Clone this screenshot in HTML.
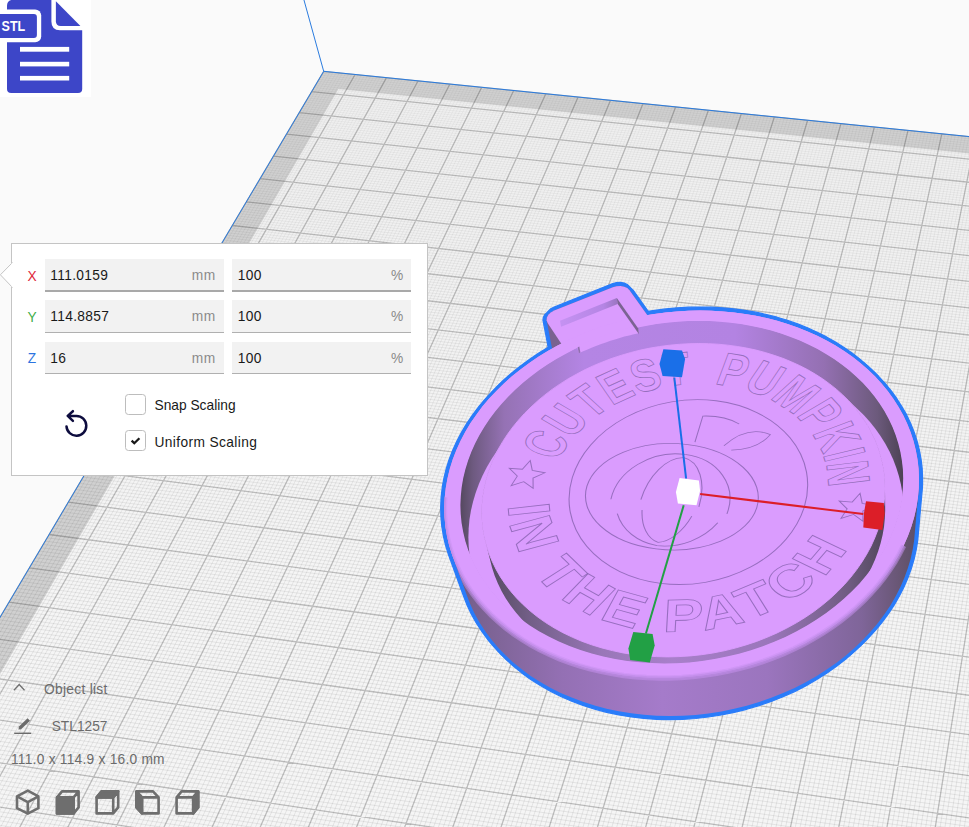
<!DOCTYPE html>
<html><head><meta charset="utf-8"><title>Cura</title>
<style>
html,body{margin:0;padding:0;}
body{width:969px;height:827px;overflow:hidden;background:#fafafa;position:relative;font-family:"Liberation Sans",sans-serif;font-size:13.75px;color:#191919;}
.vp{position:absolute;left:0;top:0;}
.abs{position:absolute;}
#stl{left:0;top:0;width:91px;height:97px;background:#fff;}
#panel{left:11px;top:242.5px;width:415px;height:231.5px;background:#fff;border:1px solid #c4c4c4;box-sizing:content-box;}
.fld{position:absolute;height:31px;background:#f2f2f2;border-bottom:1px solid #b0b0b0;box-sizing:content-box;}
.fld .v{position:absolute;left:5.6px;top:0;line-height:33.8px;white-space:nowrap;letter-spacing:0.35px;}
.fld .u{position:absolute;right:8px;top:0;line-height:33.8px;color:#8a8a8a;white-space:nowrap;letter-spacing:0.5px;}
.ax{position:absolute;width:20px;text-align:center;line-height:33.8px;}
.cb{position:absolute;width:19px;height:19px;border:1px solid #bdbdbd;border-radius:3.5px;background:#fff;}
.lbl{position:absolute;white-space:nowrap;line-height:20px;}
.g{color:#6b6b6b;white-space:nowrap;}
</style></head><body>
<svg class="vp" width="969" height="827" viewBox="0 0 969 827"><defs><clipPath id="cpPlate"><path d="M323.7 71.3 L1322.7 172.3 L1322.1 1278.3 L-236.5 1016.3Z"/></clipPath></defs>
<path d="M323.7 71.3 L1322.7 172.3 L1322.1 1278.3 L-236.5 1016.3Z" fill="#d0d0d0"/>
<defs><linearGradient id="gPl" gradientUnits="userSpaceOnUse" x1="0" y1="70" x2="0" y2="600"><stop offset="0" stop-color="#efefef"/><stop offset="1" stop-color="#f5f5f5"/></linearGradient></defs>
<path d="M338.4 89 L1295.9 186.8 L1279.8 1227.2 L-180 985.7Z" fill="url(#gPl)"/>
<defs><linearGradient id="gMin" gradientUnits="userSpaceOnUse" x1="0" y1="70" x2="0" y2="640"><stop offset="0" stop-color="#000" stop-opacity="0.035"/><stop offset="0.45" stop-color="#000" stop-opacity="0.06"/><stop offset="1" stop-color="#000" stop-opacity="0.078"/></linearGradient></defs>
<path d="M326.9 71.6L-231.8 1017.1M322.5 73.3L1322.7 174.5M330 71.9L-227.1 1017.9M321.3 75.3L1322.7 176.8M333.1 72.2L-222.4 1018.7M320.1 77.4L1322.7 179.1M336.3 72.6L-217.6 1019.5M318.9 79.4L1322.7 181.4M339.4 72.9L-212.9 1020.3M317.7 81.4L1322.7 183.7M342.5 73.2L-208.2 1021.1M316.5 83.5L1322.7 186M345.7 73.5L-203.5 1021.9M315.3 85.5L1322.7 188.3M348.8 73.8L-198.8 1022.7M314.1 87.6L1322.7 190.7M351.9 74.1L-194 1023.4M312.8 89.7L1322.7 193M358.2 74.8L-184.6 1025M310.4 93.8L1322.7 197.7M361.4 75.1L-179.8 1025.8M309.2 95.9L1322.7 200M364.5 75.4L-175.1 1026.6M307.9 98L1322.7 202.4M367.6 75.7L-170.3 1027.4M306.7 100L1322.7 204.7M370.8 76L-165.6 1028.2M305.4 102.1L1322.7 207.1M373.9 76.4L-160.8 1029M304.2 104.2L1322.7 209.5M377.1 76.7L-156.1 1029.8M303 106.3L1322.7 211.8M380.2 77L-151.3 1030.6M301.7 108.4L1322.7 214.2M383.4 77.3L-146.6 1031.4M300.5 110.5L1322.7 216.6M389.7 78L-137 1033M297.9 114.8L1322.7 221.4M392.9 78.3L-132.3 1033.8M296.7 116.9L1322.7 223.8M396 78.6L-127.5 1034.6M295.4 119L1322.7 226.2M399.2 78.9L-122.7 1035.4M294.2 121.2L1322.7 228.6M402.3 79.2L-117.9 1036.2M292.9 123.3L1322.6 231.1M405.5 79.6L-113.2 1037M291.6 125.5L1322.6 233.5M408.7 79.9L-108.4 1037.8M290.3 127.6L1322.6 235.9M411.8 80.2L-103.6 1038.6M289.1 129.8L1322.6 238.4M415 80.5L-98.8 1039.5M287.8 131.9L1322.6 240.8M421.3 81.2L-89.2 1041.1M285.2 136.3L1322.6 245.8M424.5 81.5L-84.4 1041.9M283.9 138.5L1322.6 248.2M427.7 81.8L-79.6 1042.7M282.6 140.7L1322.6 250.7M430.8 82.1L-74.8 1043.5M281.3 142.8L1322.6 253.2M434 82.4L-70 1044.3M280 145L1322.6 255.7M437.2 82.8L-65.2 1045.1M278.7 147.2L1322.6 258.2M440.3 83.1L-60.4 1045.9M277.4 149.5L1322.6 260.7M443.5 83.4L-55.6 1046.7M276.1 151.7L1322.6 263.2M446.7 83.7L-50.7 1047.5M274.8 153.9L1322.6 265.7M453.1 84.4L-41.1 1049.2M272.1 158.3L1322.6 270.8M456.2 84.7L-36.2 1050M270.8 160.6L1322.6 273.3M459.4 85L-31.4 1050.8M269.5 162.8L1322.6 275.9M462.6 85.3L-26.6 1051.6M268.1 165.1L1322.6 278.4M465.8 85.6L-21.7 1052.4M266.8 167.3L1322.6 281M469 86L-16.9 1053.2M265.5 169.6L1322.6 283.5M472.2 86.3L-12.1 1054M264.1 171.8L1322.6 286.1M475.4 86.6L-7.2 1054.8M262.8 174.1L1322.6 288.7M478.5 86.9L-2.4 1055.7M261.4 176.4L1322.6 291.3M484.9 87.6L7.4 1057.3M258.7 181L1322.6 296.5M488.1 87.9L12.2 1058.1M257.4 183.2L1322.6 299.1M491.3 88.2L17.1 1058.9M256 185.5L1322.6 301.7M494.5 88.6L22 1059.7M254.6 187.8L1322.6 304.3M497.7 88.9L26.8 1060.6M253.3 190.2L1322.6 307M500.9 89.2L31.7 1061.4M251.9 192.5L1322.6 309.6M504.1 89.5L36.6 1062.2M250.5 194.8L1322.6 312.2M507.3 89.8L41.5 1063M249.1 197.1L1322.6 314.9M510.5 90.2L46.3 1063.8M247.7 199.5L1322.6 317.6M516.9 90.8L56.1 1065.5M245 204.1L1322.6 322.9M520.1 91.1L61 1066.3M243.6 206.5L1322.6 325.6M523.3 91.5L65.9 1067.1M242.2 208.9L1322.6 328.3M526.6 91.8L70.8 1068M240.8 211.2L1322.6 331M529.8 92.1L75.7 1068.8M239.4 213.6L1322.6 333.7M533 92.4L80.6 1069.6M238 216L1322.6 336.4M536.2 92.8L85.5 1070.4M236.5 218.4L1322.6 339.1M539.4 93.1L90.4 1071.3M235.1 220.7L1322.6 341.8M542.6 93.4L95.3 1072.1M233.7 223.1L1322.6 344.6M549.1 94.1L105.2 1073.7M230.9 227.9L1322.6 350M552.3 94.4L110.1 1074.6M229.4 230.4L1322.6 352.8M555.5 94.7L115 1075.4M228 232.8L1322.6 355.6M558.7 95L120 1076.2M226.6 235.2L1322.6 358.3M562 95.4L124.9 1077.1M225.1 237.6L1322.6 361.1M565.2 95.7L129.8 1077.9M223.7 240.1L1322.6 363.9M568.4 96L134.8 1078.7M222.2 242.5L1322.6 366.7M571.6 96.3L139.7 1079.5M220.8 245L1322.6 369.5M574.9 96.7L144.7 1080.4M219.3 247.4L1322.6 372.3M581.3 97.3L154.6 1082M216.4 252.4L1322.6 378M584.6 97.7L159.5 1082.9M214.9 254.9L1322.6 380.8M587.8 98L164.5 1083.7M213.4 257.3L1322.6 383.6M591 98.3L169.4 1084.5M212 259.8L1322.6 386.5M594.3 98.6L174.4 1085.4M210.5 262.3L1322.6 389.4M597.5 99L179.4 1086.2M209 264.8L1322.6 392.2M600.8 99.3L184.3 1087M207.5 267.4L1322.6 395.1M604 99.6L189.3 1087.9M206 269.9L1322.6 398M607.2 99.9L194.3 1088.7M204.5 272.4L1322.6 400.9M613.7 100.6L204.3 1090.4M201.5 277.5L1322.6 406.7M617 100.9L209.2 1091.2M200 280L1322.6 409.6M620.2 101.3L214.2 1092.1M198.5 282.6L1322.6 412.5M623.5 101.6L219.2 1092.9M197 285.1L1322.6 415.5M626.7 101.9L224.2 1093.7M195.4 287.7L1322.5 418.4M630 102.2L229.2 1094.6M193.9 290.3L1322.5 421.4M633.2 102.6L234.2 1095.4M192.4 292.9L1322.5 424.3M636.5 102.9L239.2 1096.3M190.9 295.4L1322.5 427.3M639.7 103.2L244.2 1097.1M189.3 298L1322.5 430.3M646.3 103.9L254.3 1098.8M186.2 303.2L1322.5 436.3M649.5 104.2L259.3 1099.6M184.7 305.9L1322.5 439.3M652.8 104.5L264.3 1100.5M183.1 308.5L1322.5 442.3M656 104.9L269.3 1101.3M181.6 311.1L1322.5 445.3M659.3 105.2L274.4 1102.2M180 313.8L1322.5 448.3M662.6 105.5L279.4 1103M178.4 316.4L1322.5 451.4M665.8 105.9L284.4 1103.9M176.9 319L1322.5 454.4M669.1 106.2L289.5 1104.7M175.3 321.7L1322.5 457.5M672.4 106.5L294.5 1105.6M173.7 324.4L1322.5 460.5M678.9 107.2L304.6 1107.3M170.5 329.7L1322.5 466.7M682.2 107.5L309.7 1108.1M168.9 332.4L1322.5 469.8M685.5 107.9L314.7 1109M167.3 335.1L1322.5 472.9M688.7 108.2L319.8 1109.8M165.7 337.8L1322.5 476M692 108.5L324.9 1110.7M164.1 340.5L1322.5 479.1M695.3 108.8L329.9 1111.5M162.5 343.2L1322.5 482.3M698.6 109.2L335 1112.4M160.9 346L1322.5 485.4M701.9 109.5L340.1 1113.2M159.3 348.7L1322.5 488.6M705.2 109.8L345.1 1114.1M157.6 351.4L1322.5 491.7M711.7 110.5L355.3 1115.8M154.4 357L1322.5 498.1M715 110.8L360.4 1116.6M152.7 359.7L1322.5 501.3M718.3 111.2L365.5 1117.5M151.1 362.5L1322.5 504.5M721.6 111.5L370.6 1118.4M149.5 365.3L1322.5 507.7M724.9 111.8L375.7 1119.2M147.8 368.1L1322.5 510.9M728.2 112.2L380.8 1120.1M146.1 370.9L1322.5 514.1M731.5 112.5L385.9 1120.9M144.5 373.7L1322.5 517.3M734.8 112.8L391 1121.8M142.8 376.5L1322.5 520.6M738.1 113.2L396.1 1122.6M141.1 379.3L1322.5 523.9M744.7 113.8L406.3 1124.4M137.8 385L1322.5 530.4M748 114.2L411.4 1125.2M136.1 387.8L1322.5 533.7M751.3 114.5L416.6 1126.1M134.4 390.6L1322.5 537M754.6 114.8L421.7 1126.9M132.7 393.5L1322.5 540.3M757.9 115.2L426.8 1127.8M131 396.4L1322.5 543.6M761.2 115.5L432 1128.7M129.3 399.3L1322.5 546.9M764.5 115.8L437.1 1129.5M127.6 402.1L1322.5 550.3M767.8 116.2L442.2 1130.4M125.9 405L1322.5 553.6M771.1 116.5L447.4 1131.3M124.2 407.9L1322.5 557M777.7 117.2L457.7 1133M120.7 413.8L1322.5 563.7M781 117.5L462.8 1133.9M119 416.7L1322.5 567.1M784.4 117.8L468 1134.7M117.2 419.6L1322.5 570.5M787.7 118.2L473.1 1135.6M115.5 422.6L1322.5 573.9M791 118.5L478.3 1136.5M113.7 425.5L1322.5 577.3M794.3 118.9L483.5 1137.3M112 428.5L1322.5 580.8M797.6 119.2L488.6 1138.2M110.2 431.4L1322.5 584.2M801 119.5L493.8 1139.1M108.5 434.4L1322.5 587.7M804.3 119.9L499 1139.9M106.7 437.4L1322.5 591.1M810.9 120.5L509.4 1141.7M103.1 443.4L1322.5 598.1M814.3 120.9L514.5 1142.6M101.3 446.4L1322.5 601.6M817.6 121.2L519.7 1143.4M99.6 449.4L1322.4 605.1M820.9 121.5L524.9 1144.3M97.8 452.5L1322.4 608.6M824.3 121.9L530.1 1145.2M96 455.5L1322.4 612.2M827.6 122.2L535.3 1146M94.2 458.6L1322.4 615.7M830.9 122.6L540.5 1146.9M92.3 461.6L1322.4 619.3M834.3 122.9L545.7 1147.8M90.5 464.7L1322.4 622.8M837.6 123.2L551 1148.7M88.7 467.8L1322.4 626.4M844.3 123.9L561.4 1150.4M85 473.9L1322.4 633.6M847.6 124.2L566.6 1151.3M83.2 477L1322.4 637.2M851 124.6L571.8 1152.2M81.4 480.1L1322.4 640.8M854.3 124.9L577.1 1153.1M79.5 483.3L1322.4 644.4M857.7 125.3L582.3 1153.9M77.6 486.4L1322.4 648.1M861 125.6L587.5 1154.8M75.8 489.5L1322.4 651.7M864.4 125.9L592.8 1155.7M73.9 492.7L1322.4 655.4M867.7 126.3L598 1156.6M72 495.8L1322.4 659.1M871.1 126.6L603.3 1157.5M70.2 499L1322.4 662.8M877.8 127.3L613.8 1159.2M66.4 505.4L1322.4 670.2M881.1 127.6L619 1160.1M64.5 508.6L1322.4 673.9M884.5 128L624.3 1161M62.6 511.8L1322.4 677.7M887.9 128.3L629.5 1161.9M60.7 515L1322.4 681.4M891.2 128.6L634.8 1162.8M58.8 518.2L1322.4 685.2M894.6 129L640.1 1163.7M56.9 521.5L1322.4 689M897.9 129.3L645.4 1164.5M54.9 524.7L1322.4 692.8M901.3 129.7L650.6 1165.4M53 528L1322.4 696.6M904.7 130L655.9 1166.3M51.1 531.2L1322.4 700.4M911.4 130.7L666.5 1168.1M47.2 537.8L1322.4 708.1M914.8 131L671.8 1169M45.2 541.1L1322.4 711.9M918.2 131.4L677.1 1169.9M43.3 544.4L1322.4 715.8M921.5 131.7L682.4 1170.8M41.3 547.7L1322.4 719.7M924.9 132L687.7 1171.7M39.3 551L1322.4 723.6M928.3 132.4L693 1172.5M37.4 554.4L1322.4 727.5M931.7 132.7L698.3 1173.4M35.4 557.7L1322.4 731.4M935 133.1L703.6 1174.3M33.4 561.1L1322.4 735.3M938.4 133.4L708.9 1175.2M31.4 564.4L1322.4 739.3M945.2 134.1L719.6 1177M27.4 571.2L1322.4 747.2M948.6 134.4L724.9 1177.9M25.4 574.6L1322.4 751.2M951.9 134.8L730.2 1178.8M23.3 578L1322.4 755.2M955.3 135.1L735.6 1179.7M21.3 581.4L1322.4 759.2M958.7 135.5L740.9 1180.6M19.3 584.8L1322.4 763.2M962.1 135.8L746.2 1181.5M17.2 588.3L1322.4 767.2M965.5 136.2L751.6 1182.4M15.2 591.7L1322.4 771.3M968.9 136.5L756.9 1183.3M13.1 595.2L1322.4 775.4M972.3 136.8L762.3 1184.2M11.1 598.7L1322.4 779.4M979.1 137.5L773 1186M7 605.7L1322.4 787.7M982.5 137.9L778.4 1186.9M4.9 609.2L1322.3 791.8M985.9 138.2L783.7 1187.8M2.8 612.7L1322.3 795.9M989.3 138.6L789.1 1188.7M0.7 616.2L1322.3 800.1M992.7 138.9L794.5 1189.6M-1.4 619.7L1322.3 804.2M996.1 139.2L799.9 1190.5M-3.5 623.3L1322.3 808.4M999.5 139.6L805.2 1191.4M-5.6 626.9L1322.3 812.6M1002.9 139.9L810.6 1192.3M-7.7 630.4L1322.3 816.8M1006.3 140.3L816 1193.2M-9.9 634L1322.3 821M1013.1 141L826.8 1195M-14.1 641.2L1322.3 829.5M1016.6 141.3L832.2 1195.9M-16.3 644.8L1322.3 833.8M1020 141.7L837.6 1196.9M-18.4 648.5L1322.3 838.1M1023.4 142L843 1197.8M-20.6 652.1L1322.3 842.4M1026.8 142.3L848.4 1198.7M-22.8 655.8L1322.3 846.7M1030.2 142.7L853.8 1199.6M-24.9 659.4L1322.3 851M1033.6 143L859.3 1200.5M-27.1 663.1L1322.3 855.4M1037.1 143.4L864.7 1201.4M-29.3 666.8L1322.3 859.7M1040.5 143.7L870.1 1202.3M-31.5 670.5L1322.3 864.1M1047.3 144.4L881 1204.1M-35.9 677.9L1322.3 872.9M1050.8 144.8L886.4 1205.1M-38.1 681.7L1322.3 877.3M1054.2 145.1L891.8 1206M-40.3 685.4L1322.3 881.7M1057.6 145.5L897.3 1206.9M-42.6 689.2L1322.3 886.2M1061.1 145.8L902.7 1207.8M-44.8 693L1322.3 890.7M1064.5 146.2L908.2 1208.7M-47.1 696.8L1322.3 895.1M1067.9 146.5L913.6 1209.6M-49.3 700.6L1322.3 899.6M1071.4 146.9L919.1 1210.6M-51.6 704.4L1322.3 904.2M1074.8 147.2L924.6 1211.5M-53.8 708.2L1322.3 908.7M1081.7 147.9L935.5 1213.3M-58.4 715.9L1322.3 917.8M1085.1 148.2L941 1214.2M-60.7 719.8L1322.3 922.4M1088.6 148.6L946.5 1215.1M-63 723.6L1322.3 927M1092 148.9L951.9 1216.1M-65.3 727.5L1322.3 931.6M1095.5 149.3L957.4 1217M-67.6 731.4L1322.3 936.2M1098.9 149.6L962.9 1217.9M-69.9 735.3L1322.3 940.9M1102.4 150L968.4 1218.8M-72.3 739.3L1322.3 945.6M1105.8 150.3L973.9 1219.8M-74.6 743.2L1322.3 950.2M1109.3 150.7L979.4 1220.7M-76.9 747.2L1322.3 954.9M1116.2 151.4L990.4 1222.5M-81.6 755.1L1322.3 964.4M1119.6 151.7L995.9 1223.5M-84 759.1L1322.3 969.1M1123.1 152.1L1001.4 1224.4M-86.4 763.1L1322.3 973.9M1126.6 152.4L1006.9 1225.3M-88.8 767.1L1322.2 978.7M1130 152.8L1012.5 1226.2M-91.2 771.2L1322.2 983.5M1133.5 153.1L1018 1227.2M-93.6 775.2L1322.2 988.3M1136.9 153.5L1023.5 1228.1M-96 779.3L1322.2 993.2M1140.4 153.8L1029.1 1229M-98.4 783.4L1322.2 998M1143.9 154.2L1034.6 1230M-100.8 787.4L1322.2 1002.9M1150.8 154.9L1045.7 1231.8M-105.7 795.7L1322.2 1012.7M1154.3 155.2L1051.2 1232.8M-108.1 799.8L1322.2 1017.6M1157.8 155.6L1056.8 1233.7M-110.6 803.9L1322.2 1022.6M1161.2 155.9L1062.3 1234.6M-113.1 808.1L1322.2 1027.6M1164.7 156.3L1067.9 1235.6M-115.5 812.3L1322.2 1032.5M1168.2 156.6L1073.5 1236.5M-118 816.5L1322.2 1037.6M1171.7 157L1079 1237.4M-120.5 820.7L1322.2 1042.6M1175.1 157.3L1084.6 1238.4M-123 824.9L1322.2 1047.6M1178.6 157.7L1090.2 1239.3M-125.5 829.1L1322.2 1052.7M1185.6 158.4L1101.3 1241.2M-130.6 837.6L1322.2 1062.9M1189.1 158.7L1106.9 1242.1M-133.1 841.9L1322.2 1068M1192.6 159.1L1112.5 1243.1M-135.7 846.2L1322.2 1073.1M1196.1 159.5L1118.1 1244M-138.2 850.5L1322.2 1078.3M1199.6 159.8L1123.7 1244.9M-140.8 854.8L1322.2 1083.5M1203 160.2L1129.3 1245.9M-143.3 859.2L1322.2 1088.7M1206.5 160.5L1134.9 1246.8M-145.9 863.5L1322.2 1093.9M1210 160.9L1140.5 1247.8M-148.5 867.9L1322.2 1099.1M1213.5 161.2L1146.1 1248.7M-151.1 872.3L1322.2 1104.4M1220.5 161.9L1157.4 1250.6M-156.3 881.1L1322.2 1115M1224 162.3L1163 1251.5M-159 885.5L1322.2 1120.3M1227.5 162.6L1168.6 1252.5M-161.6 890L1322.2 1125.7M1231 163L1174.3 1253.4M-164.2 894.4L1322.2 1131M1234.5 163.3L1179.9 1254.4M-166.9 898.9L1322.2 1136.4M1238.1 163.7L1185.5 1255.3M-169.6 903.4L1322.2 1141.8M1241.6 164.1L1191.2 1256.3M-172.2 907.9L1322.2 1147.2M1245.1 164.4L1196.8 1257.2M-174.9 912.4L1322.2 1152.7M1248.6 164.8L1202.5 1258.2M-177.6 917L1322.2 1158.2M1255.6 165.5L1213.8 1260.1M-183 926.1L1322.1 1169.2M1259.1 165.8L1219.5 1261M-185.7 930.7L1322.1 1174.7M1262.6 166.2L1225.1 1262M-188.5 935.3L1322.1 1180.3M1266.2 166.5L1230.8 1262.9M-191.2 940L1322.1 1185.9M1269.7 166.9L1236.5 1263.9M-194 944.6L1322.1 1191.5M1273.2 167.3L1242.2 1264.9M-196.7 949.3L1322.1 1197.1M1276.7 167.6L1247.8 1265.8M-199.5 953.9L1322.1 1202.7M1280.3 168L1253.5 1266.8M-202.3 958.6L1322.1 1208.4M1283.8 168.3L1259.2 1267.7M-205.1 963.3L1322.1 1214.1M1290.8 169L1270.6 1269.6M-210.7 972.8L1322.1 1225.6M1294.4 169.4L1276.3 1270.6M-213.5 977.6L1322.1 1231.3M1297.9 169.7L1282 1271.6M-216.4 982.3L1322.1 1237.1M1301.4 170.1L1287.7 1272.5M-219.2 987.1L1322.1 1242.9M1305 170.5L1293.5 1273.5M-222.1 992L1322.1 1248.8M1308.5 170.8L1299.2 1274.4M-224.9 996.8L1322.1 1254.6M1312.1 171.2L1304.9 1275.4M-227.8 1001.6L1322.1 1260.5M1315.6 171.5L1310.6 1276.4M-230.7 1006.5L1322.1 1266.4M1319.1 171.9L1316.4 1277.3M-233.6 1011.4L1322.1 1272.3" stroke="url(#gMin)" stroke-width="0.95" fill="none"/>
<path d="M323.7 71.3L-236.5 1016.3M323.7 71.3L1322.7 172.3M355.1 74.5L-189.3 1024.2M311.6 91.7L1322.7 195.3M386.5 77.6L-141.8 1032.2M299.2 112.7L1322.7 219M418.1 80.8L-94 1040.3M286.5 134.1L1322.6 243.3M449.9 84L-45.9 1048.3M273.4 156.1L1322.6 268.2M481.7 87.3L2.5 1056.5M260.1 178.7L1322.6 293.9M513.7 90.5L51.2 1064.7M246.4 201.8L1322.6 320.2M545.8 93.7L100.3 1072.9M232.3 225.5L1322.6 347.3M578.1 97L149.6 1081.2M217.8 249.9L1322.6 375.1M610.5 100.3L199.3 1089.6M203 274.9L1322.6 403.8M643 103.6L249.3 1098M187.8 300.6L1322.5 433.3M675.6 106.9L299.6 1106.4M172.1 327L1322.5 463.6M708.4 110.2L350.2 1114.9M156 354.2L1322.5 494.9M741.4 113.5L401.2 1123.5M139.5 382.1L1322.5 527.1M774.4 116.8L452.5 1132.1M122.4 410.8L1322.5 560.3M807.6 120.2L504.2 1140.8M104.9 440.4L1322.5 594.6M840.9 123.6L556.2 1149.5M86.9 470.8L1322.4 630M874.4 126.9L608.5 1158.3M68.3 502.2L1322.4 666.5M908 130.3L661.2 1167.2M49.1 534.5L1322.4 704.2M941.8 133.8L714.3 1176.1M29.4 567.8L1322.4 743.2M975.7 137.2L767.7 1185.1M9 602.2L1322.4 783.5M1009.7 140.6L821.4 1194.1M-12 637.6L1322.3 825.3M1043.9 144.1L875.5 1203.2M-33.7 674.2L1322.3 868.5M1078.2 147.5L930 1212.4M-56.1 712L1322.3 913.2M1112.7 151L984.9 1221.6M-79.3 751.1L1322.3 959.7M1147.3 154.5L1040.1 1230.9M-103.2 791.5L1322.2 1007.8M1182.1 158L1095.8 1240.2M-128 833.4L1322.2 1057.8M1217 161.6L1151.8 1249.7M-153.7 876.7L1322.2 1109.7M1252.1 165.1L1208.1 1259.1M-180.3 921.5L1322.1 1163.7M1287.3 168.7L1264.9 1268.7M-207.9 968.1L1322.1 1219.8M1322.7 172.3L1322.1 1278.3M-236.5 1016.3L1322.1 1278.3" stroke="#000" stroke-opacity="0.23" stroke-width="1.3" fill="none"/>
<path d="M323.7 71.3 L1322.7 172.3 L1322.1 1278.3 L-236.5 1016.3Z" stroke="#2a7bde" stroke-width="1" fill="none"/>
<path d="M323.7 71.3L221.4 -298.5" stroke="#2a7bde" stroke-width="1" fill="none"/>
<defs><g id="sil"><path d="M452.2 555 L449.2 545.5 L447 536 L445.4 526.4 L444.5 516.7 L444.3 507 L444.7 497.4 L445.8 487.7 L447.5 478.2 L449.8 468.7 L452.8 459.3 L456.4 450 L460.5 441 L465.2 432.1 L470.4 423.3 L476.2 414.9 L482.4 406.6 L489.2 398.6 L496.4 390.9 L504 383.4 L512 376.3 L520.5 369.5 L529.3 363 L538.4 356.8 L547.8 351 L557.6 345.6 L567.6 340.5 L577.9 335.8 L588.3 331.5 L599 327.5 L609.9 324 L620.9 320.9 L632 318.2 L643.2 315.8 L654.5 313.9 L665.9 312.5 L677.2 311.4 L688.6 310.8 L700 310.6 L711.3 310.8 L722.6 311.4 L733.8 312.5 L744.8 313.9 L755.8 315.8 L766.5 318.1 L777.1 320.8 L787.5 324 L797.6 327.5 L807.5 331.4 L817.2 335.8 L826.5 340.5 L835.5 345.6 L844.1 351 L852.4 356.8 L860.3 363 L867.8 369.5 L874.9 376.3 L881.5 383.5 L887.7 390.9 L893.3 398.7 L898.4 406.7 L903.1 414.9 L907.1 423.4 L910.6 432.2 L913.5 441.1 L915.8 450.2 L917.5 459.4 L918.6 468.8 L919 478.3 L918.8 487.9 L915 530.4 L914.2 539.9 L912.7 549.4 L910.6 558.9 L907.8 568.3 L904.4 577.7 L900.4 587.1 L895.7 596.3 L890.4 605.4 L884.4 614.3 L877.9 623.1 L870.7 631.6 L863 639.8 L854.7 647.8 L845.9 655.4 L836.6 662.7 L826.7 669.6 L816.4 676.2 L805.7 682.3 L794.6 688 L783.1 693.1 L771.2 697.8 L759.1 702 L746.7 705.7 L734.2 708.8 L721.4 711.4 L708.5 713.4 L695.6 714.9 L682.6 715.7 L669.7 716 L656.7 715.7 L643.9 714.8 L631.3 713.3 L618.8 711.3 L606.6 708.7 L594.6 705.5 L583 701.8 L571.7 697.6 L560.8 692.9 L550.3 687.7 L540.3 682 L530.7 675.9 L521.7 669.3 L513.2 662.4 L505.3 655.1 L498 647.4 L491.3 639.5 L485.2 631.2 L479.7 622.7 L474.8 614 L470.6 605.1 L467.1 596Z"/><path d="M659.4 367.3 L578.7 401.1 L555.9 366.1 L554.9 363.5 L546.6 320.3 L546.9 317.5 L548.3 314.7 L550.8 312.4 L554.2 310.6 L612.8 287.2 L616.6 286.2 L620.5 286 L624.2 286.7 L627.3 288.1 L629.5 290.2 L653.7 324.1Z"/></g></defs>
<g fill="#2a7cfa" stroke="#2a7cfa" stroke-width="1.2" stroke-linejoin="round"><use href="#sil" x="3.6"/><use href="#sil" x="-3.6"/><use href="#sil" y="3.6"/><use href="#sil" y="-3.6"/></g>
<defs><linearGradient id="gWall" gradientUnits="userSpaceOnUse" x1="444.3" y1="0" x2="919" y2="0"><stop offset="0" stop-color="#5e4f6a"/><stop offset="0.06" stop-color="#78618e"/><stop offset="0.25" stop-color="#9470b4"/><stop offset="0.46" stop-color="#a57bca"/><stop offset="0.68" stop-color="#9b75be"/><stop offset="0.88" stop-color="#7f6599"/><stop offset="0.97" stop-color="#65546f"/><stop offset="1" stop-color="#5c4e66"/></linearGradient><linearGradient id="gIn" gradientUnits="userSpaceOnUse" x1="459.8" y1="0" x2="903.8" y2="0"><stop offset="0" stop-color="#54485e"/><stop offset="0.03" stop-color="#6e5a80"/><stop offset="0.1" stop-color="#9572b4"/><stop offset="0.28" stop-color="#b485e4"/><stop offset="0.62" stop-color="#b383e2"/><stop offset="0.82" stop-color="#9470b2"/><stop offset="0.94" stop-color="#6c5a7c"/><stop offset="1" stop-color="#4b4153"/></linearGradient><linearGradient id="gIn2" gradientUnits="userSpaceOnUse" x1="459.8" y1="0" x2="903.8" y2="0"><stop offset="0" stop-color="#454049"/><stop offset="0.05" stop-color="#52485c"/><stop offset="0.16" stop-color="#735f88"/><stop offset="0.32" stop-color="#9977b8"/><stop offset="0.48" stop-color="#a87fca"/><stop offset="0.7" stop-color="#9a76ba"/><stop offset="0.88" stop-color="#6e5b80"/><stop offset="0.96" stop-color="#50465a"/><stop offset="1" stop-color="#48404e"/></linearGradient><clipPath id="cpE2"><path d="M901.2 505.4 L899.1 514.4 L896.3 523.5 L893 532.5 L889 541.4 L884.4 550.2 L879.2 558.8 L873.3 567.3 L866.9 575.6 L860 583.7 L852.4 591.6 L844.3 599.1 L835.7 606.4 L826.6 613.3 L817 619.9 L807 626.1 L796.5 631.9 L785.7 637.3 L774.5 642.3 L763 646.7 L751.2 650.7 L739.2 654.2 L726.9 657.2 L714.6 659.6 L702 661.5 L689.5 662.9 L676.9 663.7 L664.3 664 L651.7 663.7 L639.3 662.8 L627 661.5 L614.9 659.5 L603 657 L591.4 654 L580.1 650.5 L569.1 646.5 L558.5 642 L548.4 637.1 L538.6 631.7 L529.4 625.9 L520.6 619.7 L512.4 613.1 L504.7 606.1 L497.6 598.8 L491 591.3 L485.1 583.4 L479.8 575.3 L475.1 567 L471 558.5 L467.5 549.9 L464.7 541.1 L462.5 532.2 L461 523.2 L460.1 514.2 L459.8 505.2 L460.2 496.1 L461.1 487.1 L462.6 478.2 L464.8 469.3 L467.5 460.5 L470.8 451.8 L474.6 443.3 L478.9 435 L483.8 426.8 L489.1 418.8 L494.9 411.1 L501.2 403.6 L507.9 396.3 L515 389.3 L522.5 382.6 L530.4 376.1 L538.6 370 L547.2 364.2 L556 358.7 L565.2 353.6 L574.6 348.8 L584.2 344.4 L594 340.3 L604 336.6 L614.2 333.2 L624.6 330.3 L635 327.7 L645.6 325.5 L656.2 323.7 L666.9 322.3 L677.6 321.3 L688.3 320.7 L699 320.5 L709.6 320.7 L720.2 321.3 L730.8 322.3 L741.2 323.7 L751.4 325.5 L761.5 327.7 L771.5 330.3 L781.2 333.2 L790.8 336.6 L800.1 340.3 L809.1 344.3 L817.8 348.8 L826.3 353.6 L834.4 358.7 L842.1 364.2 L849.5 370 L856.5 376.2 L863.1 382.6 L869.3 389.3 L875 396.3 L880.3 403.6 L885 411.1 L889.3 418.9 L893 426.9 L896.2 435.1 L898.9 443.4 L901 452 L902.5 460.6 L903.5 469.4 L903.8 478.3 L903.5 487.3 L902.7 496.3Z"/></clipPath></defs>
<path d="M452.2 555 L449.2 545.5 L447 536 L445.4 526.4 L444.5 516.7 L444.3 507 L444.7 497.4 L445.8 487.7 L447.5 478.2 L449.8 468.7 L452.8 459.3 L456.4 450 L460.5 441 L465.2 432.1 L470.4 423.3 L476.2 414.9 L482.4 406.6 L489.2 398.6 L496.4 390.9 L504 383.4 L512 376.3 L520.5 369.5 L529.3 363 L538.4 356.8 L547.8 351 L557.6 345.6 L567.6 340.5 L577.9 335.8 L588.3 331.5 L599 327.5 L609.9 324 L620.9 320.9 L632 318.2 L643.2 315.8 L654.5 313.9 L665.9 312.5 L677.2 311.4 L688.6 310.8 L700 310.6 L711.3 310.8 L722.6 311.4 L733.8 312.5 L744.8 313.9 L755.8 315.8 L766.5 318.1 L777.1 320.8 L787.5 324 L797.6 327.5 L807.5 331.4 L817.2 335.8 L826.5 340.5 L835.5 345.6 L844.1 351 L852.4 356.8 L860.3 363 L867.8 369.5 L874.9 376.3 L881.5 383.5 L887.7 390.9 L893.3 398.7 L898.4 406.7 L903.1 414.9 L907.1 423.4 L910.6 432.2 L913.5 441.1 L915.8 450.2 L917.5 459.4 L918.6 468.8 L919 478.3 L918.8 487.9 L915 530.4 L914.2 539.9 L912.7 549.4 L910.6 558.9 L907.8 568.3 L904.4 577.7 L900.4 587.1 L895.7 596.3 L890.4 605.4 L884.4 614.3 L877.9 623.1 L870.7 631.6 L863 639.8 L854.7 647.8 L845.9 655.4 L836.6 662.7 L826.7 669.6 L816.4 676.2 L805.7 682.3 L794.6 688 L783.1 693.1 L771.2 697.8 L759.1 702 L746.7 705.7 L734.2 708.8 L721.4 711.4 L708.5 713.4 L695.6 714.9 L682.6 715.7 L669.7 716 L656.7 715.7 L643.9 714.8 L631.3 713.3 L618.8 711.3 L606.6 708.7 L594.6 705.5 L583 701.8 L571.7 697.6 L560.8 692.9 L550.3 687.7 L540.3 682 L530.7 675.9 L521.7 669.3 L513.2 662.4 L505.3 655.1 L498 647.4 L491.3 639.5 L485.2 631.2 L479.7 622.7 L474.8 614 L470.6 605.1 L467.1 596Z" fill="url(#gWall)"/>
<path d="M659.4 367.3 L578.7 401.1 L555.9 366.1 L554.9 363.5 L546.6 320.3 L546.9 317.5 L548.3 314.7 L550.8 312.4 L554.2 310.6 L612.8 287.2 L616.6 286.2 L620.5 286 L624.2 286.7 L627.3 288.1 L629.5 290.2 L653.7 324.1Z" fill="#7a6290"/>
<path d="M570.8 358 L547.6 322.9 L546.6 320.3 L546.9 317.5 L548.3 314.7 L550.8 312.4 L554.2 310.6 L612.8 287.2 L616.6 286.2 L620.5 286 L624.2 286.7 L627.3 288.1 L629.5 290.2 L653.7 324.1Z" fill="#da9cfe"/>
<path d="M916.4 507.3 L914.2 517 L911.3 526.7 L907.8 536.3 L903.6 545.8 L898.7 555.3 L893.2 564.6 L887 573.7 L880.2 582.7 L872.8 591.4 L864.8 599.8 L856.1 608 L846.9 615.8 L837.2 623.3 L826.9 630.4 L816.2 637.1 L805 643.4 L793.3 649.2 L781.3 654.5 L769 659.3 L756.3 663.6 L743.4 667.4 L730.2 670.6 L716.9 673.3 L703.5 675.3 L690 676.8 L676.4 677.7 L662.8 678 L649.4 677.7 L636 676.8 L622.8 675.2 L609.8 673.1 L597 670.5 L584.5 667.2 L572.4 663.4 L560.6 659.1 L549.2 654.3 L538.3 648.9 L527.9 643.1 L518 636.8 L508.6 630.1 L499.8 623 L491.6 615.5 L484 607.6 L477.1 599.5 L470.7 591 L465.1 582.3 L460.1 573.4 L455.8 564.3 L452.2 555 L449.2 545.5 L447 536 L445.4 526.4 L444.5 516.7 L444.3 507 L444.7 497.4 L445.8 487.7 L447.5 478.2 L449.8 468.7 L452.8 459.3 L456.4 450 L460.5 441 L465.2 432.1 L470.4 423.3 L476.2 414.9 L482.4 406.6 L489.2 398.6 L496.4 390.9 L504 383.4 L512 376.3 L520.5 369.5 L529.3 363 L538.4 356.8 L547.8 351 L557.6 345.6 L567.6 340.5 L577.9 335.8 L588.3 331.5 L599 327.5 L609.9 324 L620.9 320.9 L632 318.2 L643.2 315.8 L654.5 313.9 L665.9 312.5 L677.2 311.4 L688.6 310.8 L700 310.6 L711.3 310.8 L722.6 311.4 L733.8 312.5 L744.8 313.9 L755.8 315.8 L766.5 318.1 L777.1 320.8 L787.5 324 L797.6 327.5 L807.5 331.4 L817.2 335.8 L826.5 340.5 L835.5 345.6 L844.1 351 L852.4 356.8 L860.3 363 L867.8 369.5 L874.9 376.3 L881.5 383.5 L887.7 390.9 L893.3 398.7 L898.4 406.7 L903.1 414.9 L907.1 423.4 L910.6 432.2 L913.5 441.1 L915.8 450.2 L917.5 459.4 L918.6 468.8 L919 478.3 L918.8 487.9 L917.9 497.6Z" fill="#da9cfe"/>
<path d="M901.2 505.4 L899.1 514.4 L896.3 523.5 L893 532.5 L889 541.4 L884.4 550.2 L879.2 558.8 L873.3 567.3 L866.9 575.6 L860 583.7 L852.4 591.6 L844.3 599.1 L835.7 606.4 L826.6 613.3 L817 619.9 L807 626.1 L796.5 631.9 L785.7 637.3 L774.5 642.3 L763 646.7 L751.2 650.7 L739.2 654.2 L726.9 657.2 L714.6 659.6 L702 661.5 L689.5 662.9 L676.9 663.7 L664.3 664 L651.7 663.7 L639.3 662.8 L627 661.5 L614.9 659.5 L603 657 L591.4 654 L580.1 650.5 L569.1 646.5 L558.5 642 L548.4 637.1 L538.6 631.7 L529.4 625.9 L520.6 619.7 L512.4 613.1 L504.7 606.1 L497.6 598.8 L491 591.3 L485.1 583.4 L479.8 575.3 L475.1 567 L471 558.5 L467.5 549.9 L464.7 541.1 L462.5 532.2 L461 523.2 L460.1 514.2 L459.8 505.2 L460.2 496.1 L461.1 487.1 L462.6 478.2 L464.8 469.3 L467.5 460.5 L470.8 451.8 L474.6 443.3 L478.9 435 L483.8 426.8 L489.1 418.8 L494.9 411.1 L501.2 403.6 L507.9 396.3 L515 389.3 L522.5 382.6 L530.4 376.1 L538.6 370 L547.2 364.2 L556 358.7 L565.2 353.6 L574.6 348.8 L584.2 344.4 L594 340.3 L604 336.6 L614.2 333.2 L624.6 330.3 L635 327.7 L645.6 325.5 L656.2 323.7 L666.9 322.3 L677.6 321.3 L688.3 320.7 L699 320.5 L709.6 320.7 L720.2 321.3 L730.8 322.3 L741.2 323.7 L751.4 325.5 L761.5 327.7 L771.5 330.3 L781.2 333.2 L790.8 336.6 L800.1 340.3 L809.1 344.3 L817.8 348.8 L826.3 353.6 L834.4 358.7 L842.1 364.2 L849.5 370 L856.5 376.2 L863.1 382.6 L869.3 389.3 L875 396.3 L880.3 403.6 L885 411.1 L889.3 418.9 L893 426.9 L896.2 435.1 L898.9 443.4 L901 452 L902.5 460.6 L903.5 469.4 L903.8 478.3 L903.5 487.3 L902.7 496.3Z" fill="url(#gIn)"/>
<g clip-path="url(#cpE2)"><path d="M901 537.5 L899 546.5 L896.3 555.5 L893 564.4 L889.1 573.2 L884.6 582 L879.5 590.6 L873.8 599 L867.5 607.3 L860.7 615.3 L853.3 623.1 L845.4 630.7 L836.9 637.9 L828 644.8 L818.6 651.3 L808.8 657.5 L798.6 663.2 L788 668.6 L777 673.5 L765.8 677.9 L754.2 681.9 L742.4 685.3 L730.5 688.3 L718.4 690.7 L706.1 692.6 L693.8 694 L681.5 694.8 L669.1 695 L656.9 694.7 L644.7 693.9 L632.6 692.5 L620.8 690.6 L609.1 688.1 L597.8 685.2 L586.7 681.7 L575.9 677.7 L565.6 673.2 L555.6 668.3 L546 663 L536.9 657.2 L528.3 651 L520.3 644.5 L512.7 637.6 L505.7 630.3 L499.3 622.8 L493.4 615 L488.2 607 L483.5 598.7 L479.5 590.3 L476.1 581.7 L473.3 572.9 L471.1 564.1 L469.6 555.2 L468.7 546.2 L468.4 537.2 L468.7 528.2 L469.5 519.2 L471 510.3 L473.1 501.5 L475.7 492.7 L478.9 484.1 L482.6 475.6 L486.8 467.3 L491.6 459.1 L496.8 451.2 L502.4 443.5 L508.6 436 L515.1 428.7 L522.1 421.7 L529.4 415 L537.1 408.6 L545.2 402.5 L553.6 396.7 L562.2 391.3 L571.2 386.1 L580.4 381.4 L589.8 376.9 L599.5 372.9 L609.3 369.2 L619.3 365.8 L629.5 362.9 L639.7 360.3 L650.1 358.1 L660.5 356.3 L671 355 L681.5 354 L692 353.4 L702.5 353.2 L713 353.4 L723.4 354 L733.7 355 L743.9 356.3 L754 358.1 L763.9 360.3 L773.7 362.9 L783.3 365.8 L792.7 369.2 L801.8 372.9 L810.6 376.9 L819.2 381.4 L827.5 386.2 L835.5 391.3 L843.1 396.8 L850.4 402.6 L857.2 408.7 L863.7 415.1 L869.8 421.8 L875.4 428.8 L880.5 436.1 L885.2 443.6 L889.4 451.3 L893.1 459.3 L896.2 467.4 L898.8 475.8 L900.9 484.3 L902.4 492.9 L903.3 501.7 L903.6 510.5 L903.4 519.5 L902.5 528.4Z" fill="#da9cfe"/>
<path d="M884 472.5 L884.8 480.5 L885 488.7 L885.2 510.5 L884.8 518.7 L884 526.9 L882.6 535.1 L880.6 543.3 L878.1 551.5 L875 559.7 L871.4 567.7 L867.2 575.7 L862.5 583.5 L857.3 591.2 L851.5 598.7 L845.2 606 L838.4 613.1 L831.2 619.9 L823.5 626.4 L815.3 632.6 L806.7 638.6 L797.8 644.1 L788.5 649.3 L778.8 654.2 L768.8 658.6 L758.6 662.6 L748.1 666.2 L737.4 669.3 L726.5 672 L715.5 674.1 L704.4 675.9 L693.2 677.1 L682 677.8 L670.8 678 L659.6 677.8 L648.6 677 L637.6 675.8 L626.9 674 L616.3 671.8 L606 669.2 L595.9 666 L586.1 662.4 L576.6 658.4 L567.6 654 L558.8 649.1 L550.6 643.9 L542.7 638.3 L535.3 632.4 L528.4 626.1 L522 619.6 L516.1 612.8 L510.7 605.7 L505.8 598.4 L501.5 590.9 L497.8 583.2 L494.6 575.4 L492 567.5 L486.5 545.8 L484.4 537.7 L482.9 529.6 L482 521.4 L481.7 513.1 L481.9 504.9 L482.7 496.7 L484 488.5 L485.9 480.4 L488.2 472.3 L491.1 464.4 L494.5 456.6 L498.4 448.9 L502.8 441.4 L507.6 434.1 L512.8 427 L518.5 420.1 L524.5 413.4 L531 407 L537.8 400.8 L544.9 394.9 L552.4 389.2 L560.2 383.9 L568.2 378.8 L576.6 374.1 L585.1 369.6 L593.9 365.5 L602.9 361.8 L612 358.3 L621.3 355.3 L630.8 352.5 L640.3 350.1 L650 348.1 L659.7 346.5 L669.5 345.2 L679.3 344.3 L689.1 343.7 L698.9 343.5 L708.6 343.7 L718.3 344.2 L727.9 345.2 L737.5 346.5 L746.8 348.1 L756.1 350.1 L765.2 352.5 L774.1 355.3 L782.8 358.3 L791.3 361.8 L799.5 365.5 L807.5 369.6 L815.2 374.1 L822.6 378.8 L829.6 383.9 L836.3 389.2 L842.7 394.9 L848.7 400.8 L854.3 407 L859.4 413.5 L864.2 420.2 L868.5 427.1 L872.3 434.2 L875.6 441.6 L878.5 449.1 L880.8 456.7 L882.7 464.5Z" fill="url(#gIn2)"/>
<path d="M882.4 513.3 L880.4 521.6 L877.9 529.8 L874.7 538 L871.1 546.1 L866.8 554.1 L862 561.9 L856.7 569.6 L850.9 577.1 L844.5 584.5 L837.6 591.6 L830.3 598.4 L822.4 605 L814.2 611.3 L805.5 617.2 L796.4 622.8 L786.9 628 L777.1 632.9 L767 637.3 L756.6 641.4 L746 644.9 L735.1 648.1 L724.1 650.8 L712.9 653 L701.6 654.7 L690.3 655.9 L678.9 656.6 L667.5 656.9 L656.2 656.6 L645 655.9 L633.9 654.6 L623 652.9 L612.3 650.6 L601.8 647.9 L591.6 644.8 L581.6 641.2 L572.1 637.1 L562.9 632.7 L554 627.8 L545.6 622.6 L537.7 617 L530.2 611 L523.2 604.7 L516.7 598.2 L510.7 591.3 L505.3 584.2 L500.4 576.9 L496.1 569.4 L492.3 561.6 L489.1 553.8 L486.5 545.8 L484.4 537.7 L482.9 529.6 L482 521.4 L481.7 513.1 L481.9 504.9 L482.7 496.7 L484 488.5 L485.9 480.4 L488.2 472.3 L491.1 464.4 L494.5 456.6 L498.4 448.9 L502.8 441.4 L507.6 434.1 L512.8 427 L518.5 420.1 L524.5 413.4 L531 407 L537.8 400.8 L544.9 394.9 L552.4 389.2 L560.2 383.9 L568.2 378.8 L576.6 374.1 L585.1 369.6 L593.9 365.5 L602.9 361.8 L612 358.3 L621.3 355.3 L630.8 352.5 L640.3 350.1 L650 348.1 L659.7 346.5 L669.5 345.2 L679.3 344.3 L689.1 343.7 L698.9 343.5 L708.6 343.7 L718.3 344.2 L727.9 345.2 L737.5 346.5 L746.8 348.1 L756.1 350.1 L765.2 352.5 L774.1 355.3 L782.8 358.3 L791.3 361.8 L799.5 365.5 L807.5 369.6 L815.2 374.1 L822.6 378.8 L829.6 383.9 L836.3 389.2 L842.7 394.9 L848.7 400.8 L854.3 407 L859.4 413.5 L864.2 420.2 L868.5 427.1 L872.3 434.2 L875.6 441.6 L878.5 449.1 L880.8 456.7 L882.7 464.5 L884 472.5 L884.8 480.5 L885 488.7 L884.7 496.9 L883.8 505.1Z" fill="#da9cfe" stroke="#da9cfe" stroke-width="0.9"/></g>
<path d="M916.4 507.3 L914.2 517 L911.3 526.7 L907.8 536.3 L903.6 545.8 L898.7 555.3 L893.2 564.6 L887 573.7 L880.2 582.7 L872.8 591.4 L864.8 599.8 L856.1 608 L846.9 615.8 L837.2 623.3 L826.9 630.4 L816.2 637.1 L805 643.4 L793.3 649.2 L781.3 654.5 L769 659.3 L756.3 663.6 L743.4 667.4 L730.2 670.6 L716.9 673.3 L703.5 675.3 L690 676.8 L676.4 677.7 L662.8 678 L649.4 677.7 L636 676.8 L622.8 675.2 L609.8 673.1 L597 670.5 L584.5 667.2 L572.4 663.4 L560.6 659.1 L549.2 654.3 L538.3 648.9 L527.9 643.1 L518 636.8 L508.6 630.1 L499.8 623 L491.6 615.5 L484 607.6 L477.1 599.5 L470.7 591 L465.1 582.3 L460.1 573.4 L455.8 564.3 L452.2 555 L449.2 545.5 L447 536 L445.4 526.4 L444.5 516.7 L444.3 507 L444.7 497.4 L445.8 487.7 L447.5 478.2 L449.8 468.7 L452.8 459.3 L456.4 450 L460.5 441 L465.2 432.1 L470.4 423.3 L476.2 414.9 L482.4 406.6 L489.2 398.6 L496.4 390.9 L504 383.4 L512 376.3 L520.5 369.5 L529.3 363 L538.4 356.8 L547.8 351 L557.6 345.6 L567.6 340.5 L577.9 335.8 L588.3 331.5 L599 327.5 L609.9 324 L620.9 320.9 L632 318.2 L643.2 315.8 L654.5 313.9 L665.9 312.5 L677.2 311.4 L688.6 310.8 L700 310.6 L711.3 310.8 L722.6 311.4 L733.8 312.5 L744.8 313.9 L755.8 315.8 L766.5 318.1 L777.1 320.8 L787.5 324 L797.6 327.5 L807.5 331.4 L817.2 335.8 L826.5 340.5 L835.5 345.6 L844.1 351 L852.4 356.8 L860.3 363 L867.8 369.5 L874.9 376.3 L881.5 383.5 L887.7 390.9 L893.3 398.7 L898.4 406.7 L903.1 414.9 L907.1 423.4 L910.6 432.2 L913.5 441.1 L915.8 450.2 L917.5 459.4 L918.6 468.8 L919 478.3 L918.8 487.9 L917.9 497.6ZM900.6 505.3 L898.5 514.3 L895.7 523.4 L892.4 532.3 L888.4 541.2 L883.8 550 L878.6 558.6 L872.8 567.1 L866.4 575.3 L859.5 583.4 L851.9 591.2 L843.9 598.8 L835.3 606 L826.2 612.9 L816.6 619.5 L806.6 625.7 L796.2 631.5 L785.4 636.9 L774.2 641.8 L762.8 646.2 L751 650.2 L739 653.7 L726.8 656.6 L714.5 659.1 L702 661 L689.5 662.4 L676.9 663.2 L664.3 663.4 L651.8 663.1 L639.4 662.3 L627.2 660.9 L615.1 659 L603.2 656.5 L591.7 653.5 L580.4 650 L569.5 646 L558.9 641.6 L548.7 636.6 L539 631.2 L529.8 625.4 L521.1 619.2 L512.9 612.7 L505.2 605.7 L498.1 598.5 L491.6 590.9 L485.7 583.1 L480.3 575.1 L475.6 566.8 L471.6 558.3 L468.1 549.7 L465.3 540.9 L463.2 532 L461.6 523.1 L460.7 514.1 L460.4 505.1 L460.8 496.1 L461.7 487.1 L463.2 478.2 L465.4 469.3 L468.1 460.5 L471.3 451.9 L475.1 443.4 L479.5 435.1 L484.3 426.9 L489.6 419 L495.4 411.2 L501.7 403.7 L508.4 396.5 L515.5 389.5 L523 382.8 L530.8 376.4 L539 370.3 L547.5 364.5 L556.4 359 L565.5 353.9 L574.8 349.1 L584.4 344.7 L594.2 340.6 L604.2 336.9 L614.4 333.6 L624.7 330.7 L635.1 328.1 L645.7 325.9 L656.3 324.1 L666.9 322.7 L677.6 321.7 L688.3 321.1 L699 320.9 L709.6 321.1 L720.1 321.7 L730.6 322.7 L741 324.1 L751.3 325.9 L761.3 328.1 L771.3 330.6 L781 333.6 L790.5 336.9 L799.8 340.6 L808.8 344.7 L817.5 349.1 L825.9 353.9 L834 359 L841.7 364.5 L849.1 370.3 L856.1 376.4 L862.7 382.8 L868.8 389.5 L874.5 396.5 L879.7 403.8 L884.5 411.3 L888.7 419.1 L892.5 427 L895.7 435.2 L898.3 443.5 L900.4 452 L901.9 460.7 L902.9 469.5 L903.2 478.3 L902.9 487.3 L902.1 496.3Z" fill-rule="evenodd" fill="#da9cfe"/>
<defs><clipPath id="cpCyl"><path d="M452.2 555 L449.2 545.5 L447 536 L445.4 526.4 L444.5 516.7 L444.3 507 L444.7 497.4 L445.8 487.7 L447.5 478.2 L449.8 468.7 L452.8 459.3 L456.4 450 L460.5 441 L465.2 432.1 L470.4 423.3 L476.2 414.9 L482.4 406.6 L489.2 398.6 L496.4 390.9 L504 383.4 L512 376.3 L520.5 369.5 L529.3 363 L538.4 356.8 L547.8 351 L557.6 345.6 L567.6 340.5 L577.9 335.8 L588.3 331.5 L599 327.5 L609.9 324 L620.9 320.9 L632 318.2 L643.2 315.8 L654.5 313.9 L665.9 312.5 L677.2 311.4 L688.6 310.8 L700 310.6 L711.3 310.8 L722.6 311.4 L733.8 312.5 L744.8 313.9 L755.8 315.8 L766.5 318.1 L777.1 320.8 L787.5 324 L797.6 327.5 L807.5 331.4 L817.2 335.8 L826.5 340.5 L835.5 345.6 L844.1 351 L852.4 356.8 L860.3 363 L867.8 369.5 L874.9 376.3 L881.5 383.5 L887.7 390.9 L893.3 398.7 L898.4 406.7 L903.1 414.9 L907.1 423.4 L910.6 432.2 L913.5 441.1 L915.8 450.2 L917.5 459.4 L918.6 468.8 L919 478.3 L918.8 487.9 L915 530.4 L914.2 539.9 L912.7 549.4 L910.6 558.9 L907.8 568.3 L904.4 577.7 L900.4 587.1 L895.7 596.3 L890.4 605.4 L884.4 614.3 L877.9 623.1 L870.7 631.6 L863 639.8 L854.7 647.8 L845.9 655.4 L836.6 662.7 L826.7 669.6 L816.4 676.2 L805.7 682.3 L794.6 688 L783.1 693.1 L771.2 697.8 L759.1 702 L746.7 705.7 L734.2 708.8 L721.4 711.4 L708.5 713.4 L695.6 714.9 L682.6 715.7 L669.7 716 L656.7 715.7 L643.9 714.8 L631.3 713.3 L618.8 711.3 L606.6 708.7 L594.6 705.5 L583 701.8 L571.7 697.6 L560.8 692.9 L550.3 687.7 L540.3 682 L530.7 675.9 L521.7 669.3 L513.2 662.4 L505.3 655.1 L498 647.4 L491.3 639.5 L485.2 631.2 L479.7 622.7 L474.8 614 L470.6 605.1 L467.1 596Z"/></clipPath></defs>
<g clip-path="url(#cpCyl)" fill="none"><path d="M903.6 545.8 L899.4 554 L894.8 562.1 L889.6 570 L884 577.8 L877.9 585.5 L871.3 593 L864.3 600.2 L856.9 607.3 L849 614.1 L840.7 620.7 L832 626.9 L823 632.9 L813.5 638.6 L803.8 644 L793.7 649 L783.4 653.6 L772.8 657.9 L761.9 661.8 L750.9 665.3 L739.6 668.4 L728.2 671.1 L716.7 673.3 L705.1 675.1 L693.4 676.5 L681.7 677.4 L670 677.9 L658.3 677.9 L646.6 677.5 L635.1 676.7 L623.7 675.4 L612.4 673.6 L601.3 671.4 L590.4 668.8 L579.7 665.8 L569.3 662.4 L559.2 658.6 L549.4 654.3 L540 649.8 L530.9 644.8 L522.1 639.5 L513.8 633.9 L505.9 628 L498.4 621.7 L491.4 615.2 L484.8 608.4 L478.7 601.4 L473 594.2 L467.9 586.8 L463.2 579.2 L459.1 571.4 L455.5 563.5 L452.3 555.5 L449.7 547.3 L447.6 539.1 L446 530.8 L444.9 522.5 L444.4 514.1 L444.3 505.7 L444.7 497.4" stroke="#c892f0" stroke-opacity="0.5" stroke-width="5.5"/><path d="M903.6 545.8 L899.4 554 L894.8 562.1 L889.6 570 L884 577.8 L877.9 585.5 L871.3 593 L864.3 600.2 L856.9 607.3 L849 614.1 L840.7 620.7 L832 626.9 L823 632.9 L813.5 638.6 L803.8 644 L793.7 649 L783.4 653.6 L772.8 657.9 L761.9 661.8 L750.9 665.3 L739.6 668.4 L728.2 671.1 L716.7 673.3 L705.1 675.1 L693.4 676.5 L681.7 677.4 L670 677.9 L658.3 677.9 L646.6 677.5 L635.1 676.7 L623.7 675.4 L612.4 673.6 L601.3 671.4 L590.4 668.8 L579.7 665.8 L569.3 662.4 L559.2 658.6 L549.4 654.3 L540 649.8 L530.9 644.8 L522.1 639.5 L513.8 633.9 L505.9 628 L498.4 621.7 L491.4 615.2 L484.8 608.4 L478.7 601.4 L473 594.2 L467.9 586.8 L463.2 579.2 L459.1 571.4 L455.5 563.5 L452.3 555.5 L449.7 547.3 L447.6 539.1 L446 530.8 L444.9 522.5 L444.4 514.1 L444.3 505.7 L444.7 497.4" stroke="#b988e2" stroke-opacity="0.55" stroke-width="3"/></g>
<path d="M577 346.3 L581.4 344.3 L585.9 342.4 L590.4 340.5 L595 338.7 L599.6 336.9 L604.2 335.3 L608.9 333.7 L613.6 332.2 L618.3 330.8 L623.1 329.5 L627.9 328.3 L632.7 327.1 L637.5 326 L638.7 333.2 L633.9 334.2 L629.2 335.4 L624.4 336.6 L619.7 338 L615 339.4 L610.4 340.8 L605.8 342.4 L601.2 344 L596.6 345.7 L592.1 347.5 L587.6 349.4 L583.2 351.3 L578.8 353.3Z" fill="#da9cfe"/>
<path d="M577.7 347.3 L578.8 353.3 L580.4 352.6 L579.3 346.5Z" fill="#8f6fae"/>
<defs><linearGradient id="gFar" gradientUnits="userSpaceOnUse" x1="560" y1="0" x2="618" y2="0"><stop offset="0" stop-color="#c592f2"/><stop offset="0.75" stop-color="#b585e4"/><stop offset="1" stop-color="#9a75c0"/></linearGradient></defs>
<path d="M560 320.7 L616.8 298 L617.7 304.1 L561.1 326.8Z" fill="url(#gFar)"/>
<path d="M616.8 298 L638.1 328.3 L639 334.3 L617.7 304.1Z" fill="#7b6392"/>
<g transform="matrix(2.0721 0.2592 -0.4953 1.6302 688.37 492.07)" fill="none" stroke="#7d5ca6" stroke-opacity="0.72" stroke-width="0.5" font-family="Liberation Sans, sans-serif" font-weight="bold">
<circle cx="0" cy="0" r="56"/>
<path d="M-48 4A41 32 0 0 1 -7 -28M-48 4A41 32 0 0 0 -7 36M34 4A41 32 0 0 0 -7 -28M34 4A41 32 0 0 1 -7 36"/>
<path d="M-35 10A28 30 0 0 1 -7 -22M-30 18A28 30 0 0 0 -7 34M21 10A28 30 0 0 0 -7 -22M18 16A28 30 0 0 1 -7 34"/>
<path d="M-21 8A15 28 0 0 1 -7 -20M-19 14A15 28 0 0 0 -7 32M7 8A15 28 0 0 0 -7 -20M5 14A15 28 0 0 1 -7 32"/>
<path d="M-4 -30V-46Q6 -48 14 -44M10 -30Q18 -44 30 -40Q26 -30 14 -28"/>
<path stroke="none" id="arcTop" d="M-65.6 0A65.6 65.6 0 0 1 65.6 0"/>
<path stroke="none" id="arcBot" d="M-84.6 0A84.6 84.6 0 0 0 84.6 0"/>
<text font-size="28" text-anchor="middle"><textPath href="#arcTop" startOffset="23.6%" textLength="80" lengthAdjust="spacingAndGlyphs">CUTEST</textPath></text>
<text font-size="28" text-anchor="middle"><textPath href="#arcTop" startOffset="71%" textLength="93" lengthAdjust="spacingAndGlyphs">PUMPKIN</textPath></text>
<text font-size="28" text-anchor="middle"><textPath href="#arcBot" startOffset="50%" textLength="222" lengthAdjust="spacing">IN THE PATCH</textPath></text>
<path d="M-78 -7 L-75.6 -1.2 L-69.4 -0.8 L-74.2 3.2 L-72.7 9.3 L-78 6 L-83.3 9.3 L-81.8 3.2 L-86.6 -0.8 L-80.4 -1.2Z"/><path d="M80 -12 L82.4 -6.2 L88.6 -5.8 L83.8 -1.8 L85.3 4.3 L80 1 L74.7 4.3 L76.2 -1.8 L71.4 -5.8 L77.6 -6.2Z"/>
</g>
<path d="M674.3 377.6L686.1 478.7" stroke="#1a6fe8" stroke-width="2"/>
<path d="M700.1 494L863.3 514.1" stroke="#dc1e28" stroke-width="2"/>
<path d="M683.7 505.3L645.9 633.5" stroke="#22a045" stroke-width="2"/>
<path d="M663.4 349.3 L682 350.6 L685.1 359 L682 377.2 L662.6 376 L659.5 363.9Z" fill="#1a6fe8"/>
<path d="M866 501.2 L883.8 502.9 L884.7 513.5 L882.3 529.9 L863.3 527.4 L864.1 512.3Z" fill="#dc1e28"/>
<path d="M633.3 632.1 L652.6 634.1 L654.7 645.6 L649.8 662.6 L630.2 659.9 L628.4 648.6Z" fill="#22a045"/>
<path d="M679.6 478 L698.9 480.4 L700.1 490.8 L696.5 505.3 L677.9 503.6 L675.9 492Z" fill="#ffffff"/></svg>
<div id="stl" class="abs"><svg width="91" height="97" viewBox="0 0 91 97">
<path d="M13.2 -0.2H51.4V21.5Q51.4 30.2 60 30.2H82.2V89Q82.2 93.1 78 93.1H11.2Q7 93.1 7 89V6Q7 -0.2 13.2 -0.2Z" fill="#3d46c8"/>
<path d="M55.9 1.2L80.4 26H60.7Q55.9 26 55.9 21.2Z" fill="#3d46c8"/>
<rect x="-6" y="9.6" width="47.2" height="32.6" rx="6" fill="#fff"/>
<rect x="-6" y="13.9" width="42.9" height="24.2" rx="3" fill="#3d46c8"/>
<rect x="20" y="46.9" width="49.2" height="4.8" fill="#fff"/><rect x="20" y="61.8" width="49.2" height="4.6" fill="#fff"/><rect x="20" y="75.9" width="49.2" height="4.6" fill="#fff"/>
<text x="1.6" y="31.1" font-family="Liberation Sans, sans-serif" font-weight="bold" font-size="14" fill="#fff" textLength="23.6" lengthAdjust="spacingAndGlyphs">STL</text>
</svg></div>

<div id="panel" class="abs">
<svg class="abs" style="left:-12px;top:18.6px" width="13" height="26" viewBox="0 0 13 26"><path d="M12.5 0.5L0.4 12.8L12.5 25.5" fill="#fff" stroke="#c4c4c4" stroke-width="1"/><rect x="11.6" y="1.2" width="2" height="23.6" fill="#fff"/></svg>
<div class="ax" style="left:10px;top:16.5px;color:#e0283c">X</div>
<div class="ax" style="left:10px;top:57.5px;color:#3fae49">Y</div>
<div class="ax" style="left:10px;top:98.5px;color:#2c74e0">Z</div>
<div class="fld" style="left:32.6px;top:15.6px;width:179.2px;border-bottom:2px solid #a9a9a9;height:31px"><span class="v">111.0159</span><span class="u">mm</span></div>
<div class="fld" style="left:220.2px;top:15.6px;width:179px;border-bottom:2px solid #a9a9a9;height:31px"><span class="v">100</span><span class="u" style="right:7.4px">%</span></div>
<div class="fld" style="left:32.6px;top:56.8px;width:179.2px;height:31.6px"><span class="v">114.8857</span><span class="u">mm</span></div>
<div class="fld" style="left:220.2px;top:56.8px;width:179px;height:31.6px"><span class="v">100</span><span class="u" style="right:7.4px">%</span></div>
<div class="fld" style="left:32.6px;top:98.4px;width:179.2px"><span class="v">16</span><span class="u">mm</span></div>
<div class="fld" style="left:220.2px;top:98.4px;width:179px"><span class="v">100</span><span class="u" style="right:7.4px">%</span></div>
<svg class="abs" style="left:-12px;top:-243.5px" width="120" height="460" viewBox="0 0 120 460"><path d="M66.5 426.4A9.9 9.9 0 1 0 76.3 415.9L67.9 415.9M72.9 411.2L67.7 415.9L72.9 420.9" fill="none" stroke="#0d0c3e" stroke-width="2.5" stroke-linecap="round" stroke-linejoin="round"/></svg>
<div class="cb" style="left:112.7px;top:150px"></div>
<div class="lbl" style="left:142.5px;top:152.4px">Snap Scaling</div>
<div class="cb" style="left:112.7px;top:186.6px"><svg width="19" height="19" viewBox="0 0 19 19" style="position:absolute;left:0;top:0"><path d="M5.6 9.6L8.3 12.2L13.4 7.2" fill="none" stroke="#191919" stroke-width="2.3"/></svg></div>
<div class="lbl" style="left:142.5px;top:189.6px;letter-spacing:0.38px">Uniform Scaling</div>
</div>

<svg class="abs" style="left:0;top:676px" width="40" height="20" viewBox="0 676 40 20"><path d="M13.9 690.2L19.2 684.6L24.5 690.2" fill="none" stroke="#707070" stroke-width="1.35"/></svg>
<div class="abs g" style="left:44px;top:679.8px;line-height:20px;letter-spacing:0.3px">Object list</div>
<svg class="abs" style="left:0;top:710px" width="40" height="30" viewBox="0 710 40 30"><path d="M14.2 733.3H31.2" stroke="#6b6b6b" stroke-width="1.4"/><path d="M19.6 728.2L28.8 719.4" stroke="#6b6b6b" stroke-width="3.5" stroke-linecap="butt"/><path d="M18.4 729.6L19 727.2L21 729.2Z" fill="#6b6b6b"/></svg>
<div class="abs g" style="left:51.7px;top:717px;line-height:20px">STL1257</div>
<div class="abs g" style="left:11px;top:750px;line-height:20px;letter-spacing:0.24px">111.0 x 114.9 x 16.0 mm</div>
<svg class="abs" style="left:12px;top:786px" width="200" height="32" viewBox="12 786 200 32">
<g fill="none" stroke="#6e6e6e" stroke-width="2.6" stroke-linejoin="round">
<path d="M27.8 790.6L38.4 796.4V808.2L27.8 813.6L17 808.2V796.4Z"/><path d="M17 796.4L27.8 802.2L38.4 796.4M27.8 802.2V813.6"/>
</g>
<g fill="none" stroke="#6e6e6e" stroke-width="2.6" stroke-linejoin="round">
<path d="M57 797.4H73.6V813.4H57ZM57 797.4L62 791.4H78.6L73.6 797.4M78.6 791.4V807.4L73.6 813.4"/><rect x="57" y="797.4" width="16.6" height="16" fill="#6e6e6e"/>
<path d="M96.6 797.4H113.2V813.4H96.6ZM96.6 797.4L101.6 791.4H118.2L113.2 797.4M118.2 791.4V807.4L113.2 813.4"/><path d="M96.6 797.4L101.6 791.4H118.2L113.2 797.4Z" fill="#6e6e6e"/>
<path d="M142 797.4H158.6V813.4H142ZM142 797.4L136.4 791.4H153L158.6 797.4M136.4 791.4V807.4L142 813.4"/><path d="M136.4 791.4V807.4L142 813.4V797.4Z" fill="#6e6e6e"/>
<path d="M176.6 797.4H193.2V813.4H176.6ZM176.6 797.4L181.6 791.4H198.2L193.2 797.4M198.2 791.4V807.4L193.2 813.4"/><path d="M198.2 791.4V807.4L193.2 813.4V797.4Z" fill="#6e6e6e"/>
</g></svg>
</body></html>
